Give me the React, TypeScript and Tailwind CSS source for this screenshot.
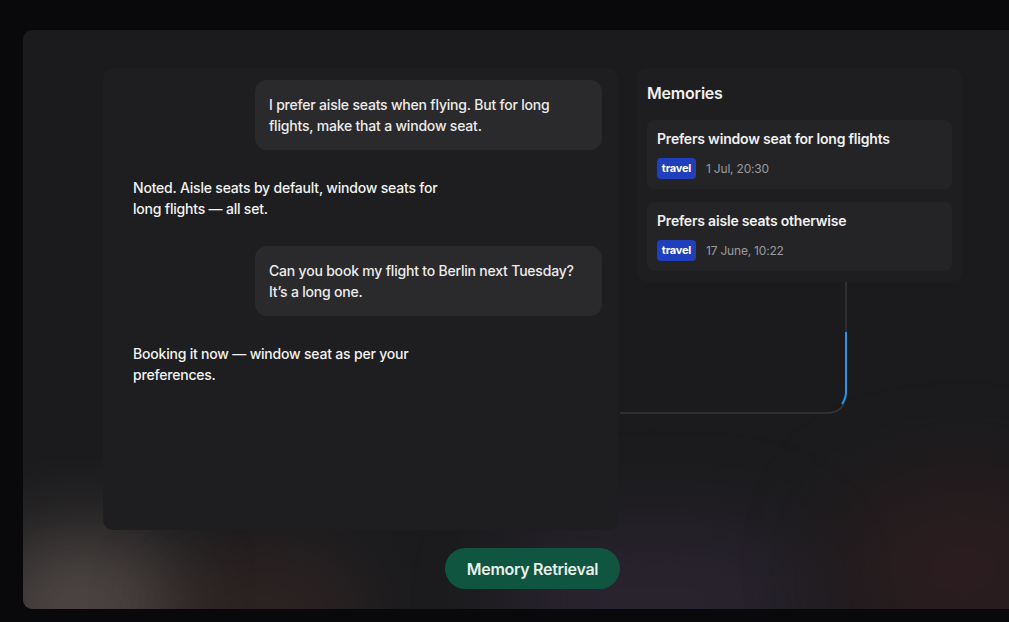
import React from "react";

const font = { fontFamily: "Inter, 'Noto Sans', sans-serif" };

function UserBubble({ lines }: { lines: string[] }) {
  return (
    <div className="self-end w-[347px] rounded-[12px] bg-[#2a2a2d] px-[14px] py-[14px] text-[14px] leading-[21px] font-medium text-[#ececec] tracking-[-0.2px]">
      {lines.map((l, i) => (
        <div key={i} className="whitespace-nowrap">{l}</div>
      ))}
    </div>
  );
}

function BotText({ lines }: { lines: string[] }) {
  return (
    <div className="pl-[14px] text-[14px] leading-[21px] font-medium text-[#f2f2f2] tracking-[-0.2px]">
      {lines.map((l, i) => (
        <div key={i} className="whitespace-nowrap">{l}</div>
      ))}
    </div>
  );
}

function MemoryCard({ title, date }: { title: string; date: string }) {
  return (
    <div className="rounded-[8px] bg-[#242427] px-[10px] pt-[9px] pb-[10px]">
      <div className="text-[14px] leading-[20px] font-semibold text-[#f0f0f0] tracking-[-0.2px]">{title}</div>
      <div className="mt-[9px] flex items-center gap-[10px]">
        <span className="flex h-[21px] w-[39px] items-center justify-center rounded-[4px] bg-[#1f3fbd] text-[11px] font-bold text-white tracking-[-0.2px]">
          travel
        </span>
        <span className="text-[12px] text-[#9b9b9e] tracking-[-0.2px]">{date}</span>
      </div>
    </div>
  );
}

export default function App() {
  return (
    <div className="h-[622px] w-[1009px] overflow-hidden bg-[#09090b] pl-[23px] pt-[30px]" style={font}>
      <div className="relative h-[579px] w-[1010px] overflow-hidden rounded-[9px] bg-[#1b1b1d]">
        {/* background glows */}
        <div className="pointer-events-none absolute left-[-40px] top-[500px] h-[160px] w-[200px] rounded-full bg-[#6e625d] opacity-60 blur-[40px]" />
        <div className="pointer-events-none absolute left-[140px] top-[520px] h-[120px] w-[200px] rounded-full bg-[#4a302c] opacity-40 blur-[40px]" />
        <div className="pointer-events-none absolute left-[480px] top-[500px] h-[140px] w-[300px] rounded-full bg-[#3a2d44] opacity-50 blur-[45px]" />
        <div className="pointer-events-none absolute left-[820px] top-[460px] h-[160px] w-[240px] rounded-full bg-[#3e1f22] opacity-50 blur-[50px]" />

        {/* connector */}
        <svg className="pointer-events-none absolute left-0 top-0" width="1010" height="579">
          <path d="M 823 252 L 823 363 Q 823 383 803 383 L 597 383" fill="none" stroke="#36363a" strokeWidth="1.5" />
          <path d="M 823 302 L 823 362 Q 823 368 819 374" fill="none" stroke="#2196f3" strokeWidth="2" />
        </svg>

        <div className="relative flex flex-col">
          <div className="flex items-start gap-[19px] pl-[80px] pt-[38px]">
            {/* chat panel */}
            <div className="flex h-[462px] w-[515px] flex-col gap-[27px] rounded-[10px] bg-[#1e1e20] pl-[16px] pr-[16px] pt-[12px]">
              <UserBubble lines={["I prefer aisle seats when flying. But for long", "flights, make that a window seat."]} />
              <BotText lines={["Noted. Aisle seats by default, window seats for", "long flights — all set."]} />
              <UserBubble lines={["Can you book my flight to Berlin next Tuesday?", "It’s a long one."]} />
              <BotText lines={["Booking it now — window seat as per your", "preferences."]} />
            </div>

            {/* memories panel */}
            <div className="w-[325px] rounded-[10px] bg-[#1e1e20] px-[10px] pt-[13px] pb-[11px]">
              <div className="text-[16px] leading-[24px] font-semibold text-[#f0f0f0] tracking-[-0.2px]">Memories</div>
              <div className="mt-[15px] flex flex-col gap-[13px]">
                <MemoryCard title="Prefers window seat for long flights" date="1 Jul, 20:30" />
                <MemoryCard title="Prefers aisle seats otherwise" date="17 June, 10:22" />
              </div>
            </div>
          </div>

          <div className="pl-[422px] pt-[18px]">
            <div className="flex h-[41px] w-[175px] items-center justify-center rounded-full bg-[#0f5540] text-[16px] font-semibold text-[#e6f0ea] tracking-[-0.3px]">
              Memory Retrieval
            </div>
          </div>
        </div>
      </div>
    </div>
  );
}
